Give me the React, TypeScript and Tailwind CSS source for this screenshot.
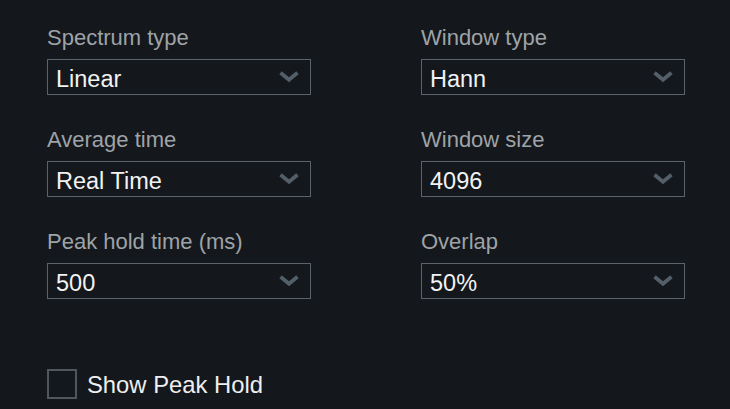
import React from 'react';

const font = { fontFamily: '"Liberation Sans", Arial, sans-serif' };

const Chevron = () => (
  <svg width="20" height="12" viewBox="0 0 20 12" className="shrink-0">
    <polyline points="3,3 10,8.8 17,3" fill="none" stroke="#535f68" strokeWidth="3.8" strokeLinecap="square" />
  </svg>
);

interface FieldProps {
  label: string;
  value: string;
}

const Field: React.FC<FieldProps> = ({ label, value }) => (
  <div className="flex flex-col">
    <div className="text-[22px] leading-[26px] text-[#9ea3a8]">{label}</div>
    <div className="mt-[8px] h-[36px] w-[264px] border border-[#5b6268] bg-[#14171b] flex items-center justify-between pl-[8px] pr-[11px]">
      <span className="text-[23.5px] leading-none text-[#f1f2f3] pt-[5px]">{value}</span>
      <Chevron />
    </div>
  </div>
);

export default function App() {
  const fields: FieldProps[] = [
    { label: 'Spectrum type', value: 'Linear' },
    { label: 'Window type', value: 'Hann' },
    { label: 'Average time', value: 'Real Time' },
    { label: 'Window size', value: '4096' },
    { label: 'Peak hold time (ms)', value: '500' },
    { label: 'Overlap', value: '50%' },
  ];

  return (
    <div className="w-[730px] h-[409px] bg-[#14171b] overflow-hidden pl-[47px] pt-[25px]" style={font}>
      <div className="grid grid-cols-[264px_264px] gap-x-[110px] gap-y-[32px]">
        {fields.map((f) => (
          <Field key={f.label} label={f.label} value={f.value} />
        ))}
      </div>
      <div className="mt-[70px] flex items-center gap-[10px]">
        <div className="w-[30px] h-[30px] border-2 border-[#4f565c] bg-[#14171b]" />
        <span className="text-[23.8px] leading-none text-[#eeeff0] pt-[1px]">Show Peak Hold</span>
      </div>
    </div>
  );
}
